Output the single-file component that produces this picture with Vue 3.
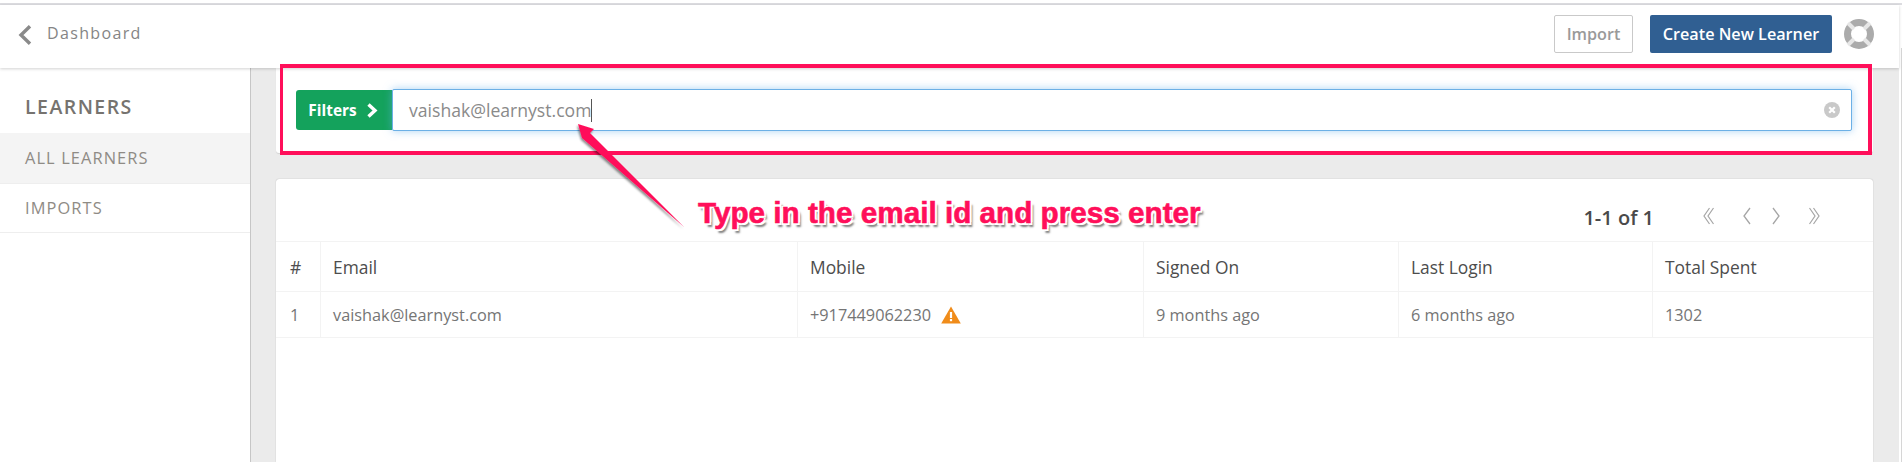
<script setup>
const columns = [
  { label: '#', value: '1' },
  { label: 'Email', value: 'vaishak@learnyst.com' },
  { label: 'Mobile', value: '+917449062230', warn: true },
  { label: 'Signed On', value: '9 months ago' },
  { label: 'Last Login', value: '6 months ago' },
  { label: 'Total Spent', value: '1302' }
]
</script>

<template>
  <div class="root">
    <div class="topline"></div>
    <div class="shell">
      <div class="page">
        <header class="header">
          <div class="back">
            <svg class="back-icon" width="14" height="20" viewBox="0 0 14 20"><polyline points="12,1.2 3,10 12,18.8" fill="none" stroke="#8a8a8a" stroke-width="3.4"/></svg>
            <span>Dashboard</span>
          </div>
          <div class="actions">
            <button class="btn import">Import</button>
            <button class="btn create">Create New Learner</button>
            <svg class="buoy" width="32" height="32" viewBox="0 0 32 32">
              <circle cx="16" cy="16" r="11.5" fill="none" stroke="#ababab" stroke-width="7"/>
              <path d="M5 5L11 11M27 5L21 11M5 27L11 21M27 27L21 21" stroke="#e6e6e6" stroke-width="4"/>
            </svg>
          </div>
        </header>
        <div class="content">
          <aside class="sidebar">
            <h2 class="side-title">LEARNERS</h2>
            <div class="side-item active">ALL LEARNERS</div>
            <div class="side-item">IMPORTS</div>
          </aside>
          <main class="main">
            <section class="filter-card">
              <button class="filters">
                <span>Filters</span>
                <svg width="12" height="15" viewBox="0 0 12 15"><polyline points="2.5,1.5 9,7.5 2.5,13.5" fill="none" stroke="#fff" stroke-width="3.4"/></svg>
              </button>
              <div class="search">
                <span class="search-text">vaishak@learnyst.com</span><span class="caret"></span>
                <svg class="clear" width="16" height="16" viewBox="0 0 16 16">
                  <circle cx="8" cy="8" r="8" fill="#c9c9c9"/>
                  <path d="M5.2 5.2L10.8 10.8M10.8 5.2L5.2 10.8" stroke="#fff" stroke-width="2.2"/>
                </svg>
              </div>
            </section>
            <section class="table-card">
              <div class="pager">
                <span class="count">1-1 of 1</span>
                <div class="pager-icons">
                  <svg width="11" height="18" viewBox="0 0 11 18"><path d="M6.5 1L1 9L6.5 17M10.5 1L5 9L10.5 17" fill="none" stroke="#a6a6a6" stroke-width="1.2"/></svg>
                  <svg class="p2" width="8" height="18" viewBox="0 0 8 18"><path d="M7 1L1 9L7 17" fill="none" stroke="#a6a6a6" stroke-width="1.3"/></svg>
                  <svg class="p3" width="8" height="18" viewBox="0 0 8 18"><path d="M1 1L7 9L1 17" fill="none" stroke="#a6a6a6" stroke-width="1.3"/></svg>
                  <svg class="p4" width="11" height="18" viewBox="0 0 11 18"><path d="M0.5 1L6 9L0.5 17M4.5 1L10 9L4.5 17" fill="none" stroke="#a6a6a6" stroke-width="1.2"/></svg>
                </div>
              </div>
              <div class="grid">
                <div v-for="c in columns" :key="c.label" class="cell head">{{ c.label }}</div>
                <div v-for="c in columns" :key="c.label + '-v'" class="cell body-cell">
                  <span>{{ c.value }}</span>
                  <svg v-if="c.warn" class="warn" width="20" height="18" viewBox="0 0 20 18">
                    <path d="M10 0.5L19.8 17.5H0.2Z" fill="#f08c1a"/>
                    <rect x="8.9" y="6" width="2.2" height="6" fill="#fff"/>
                    <rect x="8.9" y="13" width="2.2" height="2.2" fill="#fff"/>
                  </svg>
                </div>
              </div>
            </section>
          </main>
        </div>
      </div>
      <div class="scroll"><div class="thumb"></div></div>
    </div>

    <div class="mark-rect"></div>
    <svg class="mark-arrow" width="130" height="125" viewBox="0 0 130 125">
      <defs>
        <filter id="arrowShadow" x="-20%" y="-20%" width="140%" height="140%">
          <feDropShadow dx="-1" dy="2" stdDeviation="1.2" flood-color="#000" flood-opacity="0.45"/>
        </filter>
      </defs>
      <path d="M8 4L24 9L20 13L114 107L15.5 21L12 18Z" fill="#ff0f5a" filter="url(#arrowShadow)"/>
    </svg>
    <div class="mark-text">Type in the email id and press enter</div>
  </div>
</template>

<style>
html, body { margin: 0; background: #fff; overflow: hidden; }
</style>

<style scoped>
.root {
  position: relative;
  width: 1902px;
  height: 462px;
  overflow: hidden;
  background: #fff;
  font-family: "Open Sans", "Noto Sans", sans-serif;
}
.topline {
  height: 3px;
  border-bottom: 2px solid #dcdce0;
}
.shell {
  display: flex;
  height: 457px;
}
.page {
  flex: 1;
  display: flex;
  flex-direction: column;
  min-width: 0;
}
.header {
  position: relative;
  z-index: 2;
  height: 63px;
  flex: none;
  display: flex;
  align-items: center;
  justify-content: space-between;
  background: #fff;
  box-shadow: 0 1px 3px rgba(0, 0, 0, 0.18);
}
.back {
  display: flex;
  align-items: center;
  padding-left: 18px;
  color: #858585;
  font-size: 16px;
  letter-spacing: 1.35px;
  margin-top: -7px;
}
.back-icon { margin-right: 15px; margin-top: 3px; }
.actions {
  display: flex;
  align-items: center;
  margin-top: -5px;
  padding-right: 24px;
}
.btn {
  height: 38px;
  border-radius: 2px;
  font-family: inherit;
  font-size: 16.2px;
  font-weight: 600;
  padding: 0;
}
.import {
  width: 79px;
  background: #fff;
  border: 1px solid #c9c9c9;
  color: #9a9a9a;
  margin-right: 17px;
}
.create {
  width: 182px;
  background: #305f92;
  border: none;
  color: #fff;
  margin-right: 11px;
}
.buoy { display: block; }
.content {
  flex: 1;
  display: flex;
  min-height: 0;
}
.sidebar {
  width: 250px;
  flex: none;
  background: #fff;
  border-right: 1px solid #c6c6c6;
}
.side-title {
  margin: 0;
  height: 65px;
  line-height: 78px;
  padding-left: 25px;
  font-size: 19.5px;
  font-weight: 600;
  letter-spacing: 1.45px;
  color: #76736f;
}
.side-item {
  height: 48px;
  line-height: 47px;
  padding-left: 25px;
  border-bottom: 1px solid #eee;
  font-size: 16.4px;
  letter-spacing: 1.1px;
  color: #8f8b85;
}
.side-item.active { background: #f4f4f4; height: 50px; line-height: 49px; }
.main {
  flex: 1;
  min-width: 0;
  background: #ebebeb;
  padding: 0 26px 0 25px;
}
.filter-card {
  height: 85px;
  box-sizing: border-box;
  display: flex;
  padding: 22px 21px 0 20px;
  background: #fff;
  border-radius: 0 0 3px 3px;
  box-shadow: 0 1px 1px rgba(0, 0, 0, 0.1);
}
.filters {
  width: 96px;
  height: 40px;
  flex: none;
  display: flex;
  align-items: center;
  justify-content: center;
  gap: 9px;
  border: none;
  border-radius: 3px 0 0 3px;
  background: #14a25c;
  color: #fff;
  font-family: inherit;
  font-size: 15.4px;
  font-weight: 700;
  padding: 0 2px 0 0;
}
.search {
  flex: 1;
  height: 42px;
  margin-top: -1px;
  box-sizing: border-box;
  display: flex;
  align-items: center;
  padding-left: 16px;
  border: 1px solid #6cb0e6;
  border-radius: 2px;
  background: #fff;
  box-shadow: 0 0 8px rgba(102, 175, 233, 0.55);
  font-size: 17.6px;
  color: #8a8a8a;
}
.caret {
  width: 1px;
  height: 23px;
  background: #555;
}
.clear { margin-left: auto; margin-right: 11px; }
.table-card {
  margin-top: 26px;
  height: 283px;
  background: #fff;
  border-radius: 3px 3px 0 0;
  box-shadow: 0 0 1px rgba(0, 0, 0, 0.35);
}
.pager {
  height: 63px;
  box-sizing: border-box;
  display: flex;
  align-items: center;
  justify-content: flex-end;
  padding: 15px 53px 0 0;
  border-bottom: 1px solid #f3f3f3;
}
.count {
  font-size: 20px;
  font-weight: 600;
  color: #4a4a4a;
  margin-right: 49px;
}
.pager-icons {
  display: flex;
  align-items: center;
  margin-top: -3px;
}
.pager-icons svg { display: block; }
.p2 { margin-left: 29px; }
.p3 { margin-left: 21px; }
.p4 { margin-left: 29px; }
.grid {
  display: grid;
  grid-template-columns: 44px 477px 346px 255px 254px 221px;
  grid-template-rows: 50px 46px;
}
.cell {
  box-sizing: border-box;
  display: flex;
  align-items: center;
  padding-left: 12px;
  border-left: 1px solid #f3f3f3;
  border-bottom: 1px solid #f3f3f3;
  font-size: 16.3px;
}
.cell:nth-child(6n + 1) {
  border-left: none;
  padding-left: 14px;
}
.head { color: #4d4d4d; font-size: 17.4px; }
.body-cell { color: #757575; }
.warn { margin-left: 10px; }
.scroll {
  width: 3px;
  flex: none;
  background: #fff;
  display: flex;
  justify-content: flex-end;
  padding-top: 43px;
  box-sizing: border-box;
}
.thumb {
  width: 1px;
  height: 100%;
  background: #d6d6d6;
}
.mark-rect {
  position: absolute;
  z-index: 3;
  left: 280px;
  top: 64px;
  width: 1592px;
  height: 91px;
  box-sizing: border-box;
  border: 4px solid #ff0f5a;
  border-left-width: 3px;
  pointer-events: none;
}
.mark-arrow {
  position: absolute;
  z-index: 4;
  left: 570px;
  top: 120px;
}
.mark-text {
  position: absolute;
  z-index: 4;
  left: 698px;
  top: 196px;
  font-family: "Liberation Sans", Arial, sans-serif;
  font-size: 29.7px;
  line-height: 34px;
  font-weight: 700;
  white-space: nowrap;
  color: #ff0f5a;
  -webkit-text-stroke: 0.6px #ff0f5a;
  text-shadow: -2px -1px 0 #fff, 2px -1px 0 #fff, -2px 2px 0 #fff, 2px 2px 0 #fff, 3px 4px 2px rgba(0, 0, 0, 0.5);
}
</style>
